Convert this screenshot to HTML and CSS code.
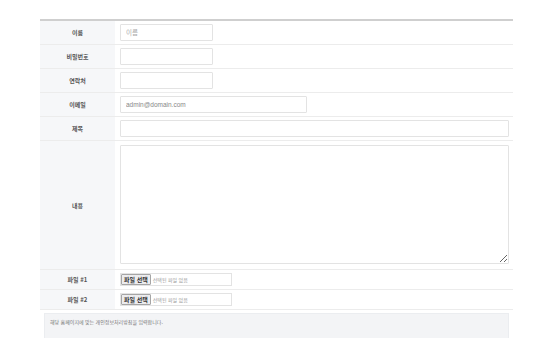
FILE: index.html
```html
<!DOCTYPE html>
<html lang="ko">
<head>
<meta charset="utf-8">
<link rel="stylesheet" href="styles.css">
</head>
<body>
<div class="wrap">
  <table class="form">
    <tr>
      <th>이름</th>
      <td><input class="inp short" type="text" placeholder="이름"></td>
    </tr>
    <tr>
      <th>비밀번호</th>
      <td><input class="inp short" type="password"></td>
    </tr>
    <tr>
      <th>연락처</th>
      <td><input class="inp short" type="text"></td>
    </tr>
    <tr>
      <th>이메일</th>
      <td><input class="inp mid" type="text" value="admin@domain.com"></td>
    </tr>
    <tr>
      <th>제목</th>
      <td><input class="inp full" type="text"></td>
    </tr>
    <tr class="tall">
      <th>내용</th>
      <td><textarea class="area"></textarea></td>
    </tr>
    <tr class="file-row">
      <th>파일 #1</th>
      <td><div class="file"><span class="file-btn">파일 선택</span><span class="file-txt">선택된 파일 없음</span></div></td>
    </tr>
    <tr class="file-row">
      <th>파일 #2</th>
      <td><div class="file"><span class="file-btn">파일 선택</span><span class="file-txt">선택된 파일 없음</span></div></td>
    </tr>
  </table>
  <div class="privacy">해당 홈페이지에 맞는 개인정보처리방침을 입력합니다.</div>
</div>
</body>
</html>
```

FILE: styles.css
```css
html, body {
  margin: 0;
  padding: 0;
  background: #fff;
}
body {
  font-family: "Noto Sans CJK KR", "Noto Sans", sans-serif;
  color: #333;
  overflow: hidden;
}
.wrap {
  width: 473px;
  margin: 19px 0 0 40px;
}
.form {
  width: 100%;
  border-collapse: collapse;
  border-top: 2px solid #cfcfcf;
}
.form th,
.form td {
  border-bottom: 1px solid #ececec;
  padding: 0;
  height: 23px;
}
.form th {
  width: 76px;
  background: #f6f7f9;
  font-size: 6px;
  font-weight: 700;
  color: #555;
  text-align: center;
}
.form td {
  padding-left: 5px;
  padding-right: 4px;
}
.inp {
  display: block;
  box-sizing: border-box;
  height: 17px;
  border: 1px solid #e3e3e3;
  border-radius: 1px;
  padding: 0 5px;
  font-family: "Liberation Sans", "Noto Sans CJK KR", sans-serif;
  font-size: 6.5px;
  color: #888;
  background: #fff;
  outline: none;
}
.inp::placeholder { color: #aaa; }
.short { width: 93px; }
.mid { width: 187px; }
.full { width: 389px; }
.tall th { height: 128px; }
.tall td { height: 124px; vertical-align: top; padding-top: 4px; }
.area {
  display: block;
  box-sizing: border-box;
  width: 389px;
  height: 119px;
  border: 1px solid #e3e3e3;
  border-radius: 1px;
  margin: 0;
  outline: none;
}
.file-row th, .file-row td { height: 19px; }
.file {
  display: flex;
  align-items: center;
  box-sizing: border-box;
  width: 112px;
  height: 13px;
  border: 1px solid #e3e3e3;
  gap: 2px;
}
.file-btn {
  box-sizing: border-box;
  height: 11px;
  line-height: 9px;
  padding: 0 2px;
  border: 1px solid #a5a5a5;
  border-radius: 1px;
  background: #ececee;
  font-size: 6px;
  font-weight: 700;
  color: #333;
}
.file-txt {
  font-size: 5px;
  color: #999;
}
.privacy {
  box-sizing: border-box;
  margin: 3px 4px 0 4px;
  height: 26px;
  background: #f3f4f6;
  border: 1px solid #ebedf0;
  border-bottom: 0;
  padding: 4px 5px;
  font-size: 5px;
  color: #777;
}
```
